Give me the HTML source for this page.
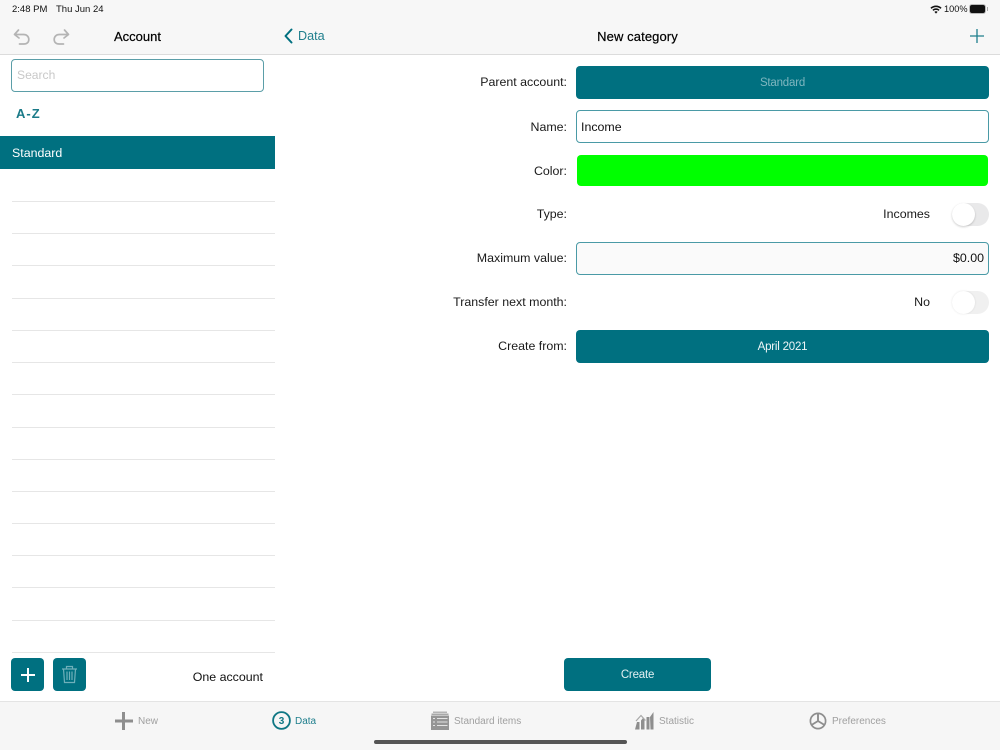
<!DOCTYPE html>
<html>
<head>
<meta charset="utf-8">
<style>
html,body{margin:0;padding:0;width:1000px;height:750px;overflow:hidden;background:#fff;font-family:"Liberation Sans",sans-serif;color:#1a1a1a}
.a{position:absolute;white-space:nowrap}
.t{position:absolute;white-space:nowrap;font-size:12.4px;line-height:16px}
.r{text-align:right;width:200px;left:367px}
.btn{position:absolute;background:#007080;border-radius:4px;color:#fff;text-align:center;font-size:11.5px;letter-spacing:-.2px}
.ln{position:absolute;left:12px;width:263px;height:1px;background:#e6e6e6}
.sw{position:absolute;left:952px;width:37px;height:23px;border-radius:12px;background:#e9e9ea}
.sw i{position:absolute;left:0;top:0;width:23px;height:23px;border-radius:50%;background:#fff;box-shadow:0 1px 2px rgba(0,0,0,.2)}
.tab{position:absolute;font-size:10px;line-height:12px;color:#a0a0a0;white-space:nowrap;top:716px}
</style>
</head>
<body>
<!-- header -->
<div class="a" style="left:0;top:0;width:1000px;height:54px;background:#f7f7f7"></div>
<div class="a" style="left:0;top:54px;width:1000px;height:1px;background:#dcdcdc"></div>
<div class="a" style="left:12px;top:4px;font-size:9.5px;line-height:12px;color:#111">2:48 PM</div>
<div class="a" style="left:56px;top:4px;font-size:9.5px;line-height:12px;color:#111">Thu Jun 24</div>
<svg class="a" style="left:930px;top:5px" width="12" height="9" viewBox="0 0 12 9"><path d="M6 8.600L4.400 6.900a2.300 2.300 0 0 1 3.200 0zM3.400 5.900L2.400 4.800a5.100 5.100 0 0 1 7.200 0L8.600 5.900a3.700 3.700 0 0 0-5.200 0zM1.500 3.900L.4 2.800a8 8 0 0 1 11.200 0L10.500 3.900a6.500 6.500 0 0 0-9 0z" fill="#111"/></svg>
<div class="a" style="left:944px;top:3px;font-size:9.200px;line-height:12px;color:#111">100%</div>
<div class="a" style="left:970px;top:5px;width:15px;height:8px;border-radius:2px;background:#111;box-shadow:0 0 0 1px #bbb"></div>
<div class="a" style="left:987px;top:7px;width:1px;height:4px;background:#aaa"></div>

<svg class="a" style="left:12px;top:27px" width="20" height="20" viewBox="0 0 20 20" fill="none" stroke="#b4b4b4" stroke-width="1.700" stroke-linecap="round" stroke-linejoin="round"><path d="M6.500 3L2.500 7.500L7 11M3 7.500H11.500C15 7.500 16.800 9.800 16.800 12.500C16.800 15.200 15 17 12 17H7.500"/></svg>
<svg class="a" style="left:51px;top:27px" width="20" height="20" viewBox="0 0 20 20" fill="none" stroke="#b4b4b4" stroke-width="1.700" stroke-linecap="round" stroke-linejoin="round"><path d="M13.500 3L17.500 7.500L13 11M17 7.500H8.500C5 7.500 3.200 9.800 3.200 12.500C3.200 15.200 5 17 8 17H12.500"/></svg>
<div class="a" style="left:0;width:275px;top:29px;text-align:center;font-size:13px;line-height:16px;color:#000;-webkit-text-stroke:.2px #000">Account</div>
<svg class="a" style="left:283px;top:28px" width="11" height="16" viewBox="0 0 11 16" fill="none" stroke="#007080" stroke-width="2" stroke-linecap="round" stroke-linejoin="round"><path d="M8.500 1.500L2.500 8L8.500 14.500"/></svg>
<div class="a" style="left:298px;top:28px;font-size:12.6px;line-height:16px;color:#1f7f8d">Data</div>
<div class="a" style="left:275px;width:725px;top:29px;text-align:center;font-size:13px;line-height:16px;letter-spacing:.1px;color:#000;-webkit-text-stroke:.2px #000">New category</div>
<svg class="a" style="left:970px;top:29px" width="14" height="14" viewBox="0 0 14 14" stroke="#1f7f8d" stroke-width="1.300"><path d="M7 0V14M0 7H14"/></svg>

<!-- left -->
<div class="a" style="left:11px;top:59px;width:251px;height:31px;border:1px solid #5b9ea8;border-radius:4px;background:#fff"></div>
<div class="t" style="left:17px;top:67px;color:#c8c8c8;font-size:12.1px">Search</div>
<div class="a" style="left:16px;top:106px;font-size:13px;line-height:16px;font-weight:700;color:#1a7a88;letter-spacing:1px">A-Z</div>
<div class="a" style="left:0;top:136px;width:275px;height:33px;background:#007080"></div>
<div class="t" style="left:12px;top:145px;color:#fff">Standard</div>

<div class="ln" style="top:201px"></div><div class="ln" style="top:233px"></div><div class="ln" style="top:265px"></div>
<div class="ln" style="top:298px"></div><div class="ln" style="top:330px"></div><div class="ln" style="top:362px"></div>
<div class="ln" style="top:394px"></div><div class="ln" style="top:427px"></div><div class="ln" style="top:459px"></div>
<div class="ln" style="top:491px"></div><div class="ln" style="top:523px"></div><div class="ln" style="top:555px"></div>
<div class="ln" style="top:587px"></div><div class="ln" style="top:620px"></div><div class="ln" style="top:652px"></div>

<div class="btn" style="left:11px;top:658px;width:33px;height:33px"></div>
<svg class="a" style="left:21px;top:668px" width="14" height="14" viewBox="0 0 14 14" stroke="#fff" stroke-width="2"><path d="M7 0V14M0 7H14"/></svg>
<div class="btn" style="left:53px;top:658px;width:33px;height:33px"></div>
<svg class="a" style="left:61px;top:665px" width="17" height="19" viewBox="0 0 17 19" fill="none" stroke="#6fb0ba" stroke-width="1.200"><path d="M1 4H16M5.500 4V1.500H11.500V4M2.500 4L3.500 17.500H13.500L14.500 4M6 6.500V15M8.500 6.500V15M11 6.500V15"/></svg>
<div class="t" style="left:63px;top:669px;width:200px;text-align:right;color:#111">One account</div>

<!-- form -->
<div class="t r" style="top:74px">Parent account:</div>
<div class="btn" style="left:576px;top:66px;width:413px;height:33px;line-height:34px;color:#7fb6bf">Standard</div>

<div class="t r" style="top:119px">Name:</div>
<div class="a" style="left:576px;top:110px;width:411px;height:31px;border:1px solid #4a9aa6;border-radius:4px;background:#fff"></div>
<div class="t" style="left:581px;top:119px;color:#111">Income</div>

<div class="t r" style="top:163px">Color:</div>
<div class="a" style="left:577px;top:155px;width:411px;height:31px;background:#00ff00;border-radius:4px"></div>

<div class="t r" style="top:206px">Type:</div>
<div class="t" style="left:730px;width:200px;top:206px;text-align:right">Incomes</div>
<div class="sw" style="top:203px"><i></i></div>

<div class="t r" style="top:250px">Maximum value:</div>
<div class="a" style="left:576px;top:242px;width:411px;height:31px;border:1px solid #4a9aa6;border-radius:4px;background:#fafafa"></div>
<div class="t" style="left:784px;width:200px;top:250px;text-align:right;color:#111">$0.00</div>

<div class="t r" style="top:294px">Transfer next month:</div>
<div class="t" style="left:730px;width:200px;top:294px;text-align:right">No</div>
<div class="sw" style="top:291px;background:#f0f0f0"><i style="box-shadow:0 0 2px rgba(0,0,0,.1)"></i></div>

<div class="t r" style="top:338px">Create from:</div>
<div class="btn" style="left:576px;top:330px;width:413px;height:33px;line-height:34px;color:#eef6f7">April 2021</div>

<div class="btn" style="left:564px;top:658px;width:147px;height:33px;line-height:34px;color:#e2f0f2">Create</div>

<!-- tab bar -->
<div class="a" style="left:0;top:701px;width:1000px;height:49px;background:#f6f6f6"></div>
<div class="a" style="left:0;top:701px;width:1000px;height:1px;background:#e4e4e4"></div>

<svg class="a" style="left:114px;top:711px" width="20" height="20" viewBox="0 0 20 20" fill="#8e8e8e"><path d="M8 1H11V8.500H19V11.500H11V19H8V11.500H1V8.500H8z"/></svg>
<div class="tab" style="left:138px">New</div>

<svg class="a" style="left:272px;top:711px" width="19" height="19" viewBox="0 0 19 19"><circle cx="9.500" cy="9.500" r="8.400" fill="none" stroke="#0f7784" stroke-width="1.800"/><text x="9.500" y="13" text-anchor="middle" font-family="Liberation Sans" font-size="10" font-weight="700" fill="#0f7784">3</text></svg>
<div class="tab" style="left:295px;color:#1f7f8d">Data</div>

<svg class="a" style="left:430px;top:711px" width="20" height="19" viewBox="0 0 20 19"><path d="M3 0.500H17V2H3z" fill="#b4b4b4"/><path d="M1.500 2.500H18.500V4H1.500z" fill="#a8a8a8"/><path d="M1 4.500H19V19H1z" fill="#959595"/><path d="M7 7.500H17.500M7 11H17.500M7 14.500H17.500M3 7.500H5M3 11H5M3 14.500H5" stroke="#e4e4e4" stroke-width="1"/></svg>
<div class="tab" style="left:454px">Standard items</div>

<svg class="a" style="left:635px;top:711px" width="19" height="19" viewBox="0 0 19 19" fill="#8e8e8e"><path d="M0 18.500L2 11H4.500V18.500zM6 18.500V9.500L8 7L9.500 9V18.500zM11.500 18.500V6H14.500V18.500zM15 6L18.500 1V18.500H15.500z"/><path d="M1 10L6 4.500L10.500 9.500" fill="none" stroke="#a8a8a8" stroke-width="1.200"/></svg>
<div class="tab" style="left:659px">Statistic</div>

<svg class="a" style="left:809px;top:712px" width="18" height="18" viewBox="0 0 18 18" fill="none" stroke="#8e8e8e"><circle cx="9" cy="9" r="7.600" stroke-width="1.700"/><path d="M9 1.500V9M9 9L2.500 13M9 9L15.500 13" stroke-width="1.900"/></svg>
<div class="tab" style="left:832px">Preferences</div>

<div class="a" style="left:374px;top:740px;width:253px;height:4px;border-radius:2px;background:#555"></div>
</body>
</html>
